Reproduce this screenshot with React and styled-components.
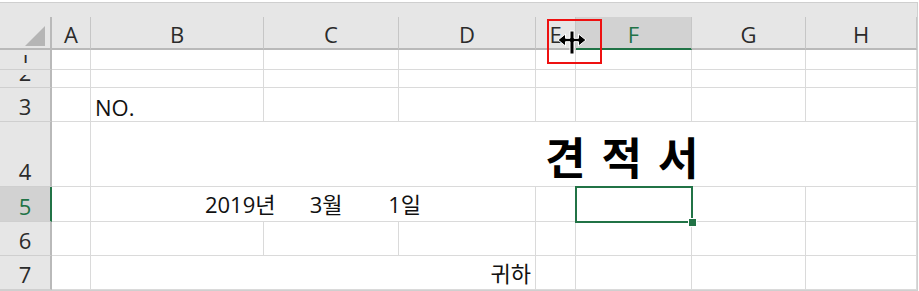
import React from 'react';
import styled, { createGlobalStyle } from 'styled-components';

const GlobalStyle = createGlobalStyle`
  html, body {
    margin: 0;
    padding: 0;
    background: #ffffff;
  }
  body {
    font-family: "Open Sans", "Noto Sans CJK KR", sans-serif;
  }
`;

const Sheet = styled.div`
  position: relative;
  margin-top: 2px;
  width: 918px;
  box-sizing: border-box;
  border: 1px solid #cfcfcf;
  border-left: none;
  display: grid;
  grid-template-columns: 52px 39px 173px 135px 137px 40px 116px 114px 111px;
  grid-template-rows: 14px 33px 20px 18px 34px 65px 35px 34px 34px;
  background: #ffffff;
  font-family: "Open Sans", "Noto Sans CJK KR", sans-serif;
`;

const TopBand = styled.div`
  grid-column: 1 / -1;
  background: #e6e6e6;
`;

const Corner = styled.div`
  background: #e6e6e6;
  border-right: 2px solid #b9b9b9;
  border-bottom: 2px solid #b9b9b9;
  display: flex;
  align-items: flex-end;
  justify-content: flex-end;
  padding: 0 5px 2px 0;
`;

const Triangle = styled.div`
  width: 20px;
  height: 20px;
  background: #b5b5b5;
  clip-path: polygon(100% 0, 100% 100%, 0 100%);
`;

const ColHead = styled.div`
  background: ${p => (p.active ? '#d2d2d2' : '#e6e6e6')};
  color: ${p => (p.active ? '#217346' : '#2b2b2b')};
  border-right: 1px solid #c6c6c6;
  border-bottom: 2px solid ${p => (p.active ? '#217346' : '#b9b9b9')};
  display: flex;
  align-items: center;
  justify-content: center;
  font-size: 22px;
  line-height: 22px;
  padding-top: 2px;
`;

const RowHead = styled.div`
  background: ${p => (p.active ? '#d2d2d2' : '#e6e6e6')};
  color: ${p => (p.active ? '#217346' : '#2b2b2b')};
  border-right: 2px solid ${p => (p.active ? '#217346' : '#b9b9b9')};
  border-bottom: 1px solid #cfcfcf;
  padding-top: 5px;
  display: flex;
  min-height: 0;
  overflow: hidden;
`;

const RowNum = styled.div`
  flex: 1;
  overflow: hidden;
  display: flex;
  align-items: flex-end;
  justify-content: center;
  padding-bottom: 4px;
  font-size: 22px;
  line-height: 22px;
`;

const Cell = styled.div`
  position: relative;
  grid-column: span ${p => p.span || 1};
  border-right: 1px solid #dadada;
  border-bottom: 1px solid #dadada;
  display: flex;
  align-items: flex-end;
  justify-content: ${p => p.align || 'flex-start'};
  padding: 0 4px ${p => p.pb ?? 3}px;
  min-height: 0;
  font-size: 22px;
  line-height: 22px;
  color: #111111;
  white-space: pre;
`;

const Title = styled(Cell)`
  padding-left: 454px;
  padding-bottom: 8px;
  font-family: "Noto Sans CJK KR", sans-serif;
  font-weight: 700;
  font-size: 44px;
  line-height: 44px;
  letter-spacing: 3px;
  color: #000000;
`;

const Selection = styled.div`
  position: absolute;
  z-index: 2;
  left: -1px;
  top: -1px;
  right: -2px;
  bottom: -2px;
  border: 2px solid #217346;
`;

const FillHandle = styled.div`
  position: absolute;
  right: -6px;
  bottom: -6px;
  width: 7px;
  height: 7px;
  background: #217346;
  border: 1px solid #ffffff;
`;

const Highlight = styled.div`
  position: absolute;
  z-index: 3;
  left: 547px;
  top: 16px;
  width: 55px;
  height: 45px;
  box-sizing: border-box;
  border: 2px solid #ee1111;
`;

const Cursor = styled.svg`
  position: absolute;
  z-index: 4;
  left: 556px;
  top: 27px;
`;

const cols = ['A', 'B', 'C', 'D', 'E', 'F', 'G', 'H'];

function Blank({ n }) {
  return Array.from({ length: n }, (_, i) => <Cell key={i} />);
}

function ResizeCursor() {
  return (
    <Cursor width="32" height="26" viewBox="0 0 32 26">
      <path
        d="M2 10 L9.5 4 L9.5 8.3 L14 8.3 L14 1 L18 1 L18 8.3 L22.5 8.3 L22.5 4 L30 10 L22.5 16 L22.5 11.7 L18 11.7 L18 24 L14 24 L14 11.7 L9.5 11.7 L9.5 16 Z"
        fill="#000000"
        stroke="#ffffff"
        strokeWidth="1"
        strokeLinejoin="miter"
      />
    </Cursor>
  );
}

export default function App() {
  return (
    <>
      <GlobalStyle />
      <Sheet>
        <TopBand />
        <Corner>
          <Triangle />
        </Corner>
        {cols.map(c => (
          <ColHead key={c} active={c === 'F'}>{c}</ColHead>
        ))}

        <RowHead><RowNum>1</RowNum></RowHead>
        <Blank n={8} />

        <RowHead><RowNum>2</RowNum></RowHead>
        <Blank n={8} />

        <RowHead><RowNum>3</RowNum></RowHead>
        <Cell />
        <Cell>NO.</Cell>
        <Blank n={6} />

        <RowHead><RowNum>4</RowNum></RowHead>
        <Cell />
        <Title span={7}>견 적 서</Title>

        <RowHead active><RowNum>5</RowNum></RowHead>
        <Cell />
        <Cell span={3} align="center" pb={6}>{'2019년      3월        1일'}</Cell>
        <Cell />
        <Cell>
          <Selection>
            <FillHandle />
          </Selection>
        </Cell>
        <Blank n={2} />

        <RowHead><RowNum>6</RowNum></RowHead>
        <Blank n={8} />

        <RowHead><RowNum>7</RowNum></RowHead>
        <Cell />
        <Cell span={3} align="flex-end" pb={5}>귀하</Cell>
        <Blank n={4} />

        <Highlight />
        <ResizeCursor />
      </Sheet>
    </>
  );
}
